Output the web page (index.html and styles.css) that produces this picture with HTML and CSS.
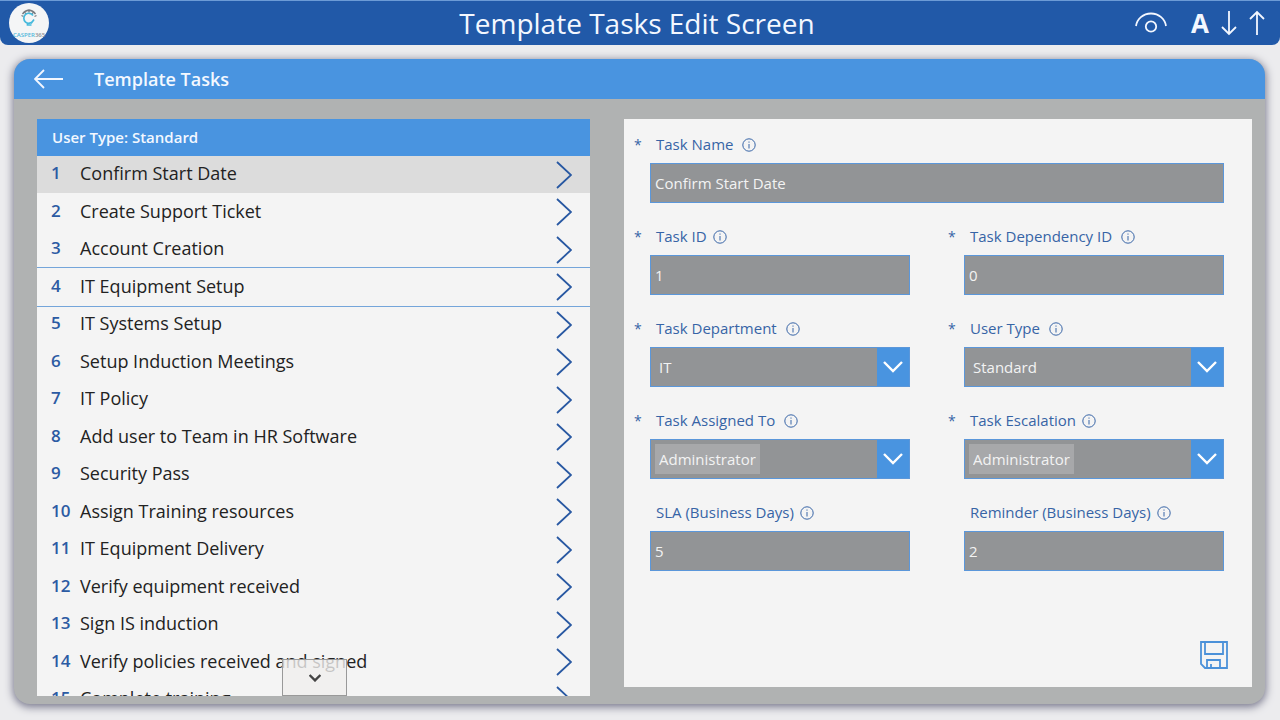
FILE: index.html
```html
<!DOCTYPE html>
<html lang="en">
<head>
<meta charset="utf-8">
<meta name="viewport" content="width=device-width, initial-scale=1">
<title>Template Tasks Edit Screen</title>
<link rel="stylesheet" href="styles.css">
</head>
<body>
<svg class="symbols" aria-hidden="true">
  <symbol id="chevron-right" viewBox="0 0 16 28"><path d="M1 1 15 14 1 27"/></symbol>
  <symbol id="chevron-down" viewBox="0 0 20 12"><path d="M1 1 10 10 19 1"/></symbol>
  <symbol id="info" viewBox="0 0 14 14"><circle cx="7" cy="7" r="6.2"/><path d="M7 6v4.5M7 3.5v1.2"/></symbol>
</svg>

<header class="topbar">
  <svg class="logo" viewBox="0 0 40 40" role="img" aria-label="Casper365">
    <circle cx="20" cy="20" r="20" fill="#f4f5f6"/>
    <path d="M12.500 12.500l2 1M15.500 8.500l1.500 2.500M20 6.500v3M24.500 8.500l-1.500 2.500M27.500 12.500l-2 1M13.500 11q2.500-3.500 6.500-4 4 .5 6.500 4" fill="none" stroke="#777b80" stroke-width="1.300"/>
    <path d="M24 12.500a5 5 0 1 0 0 5.500M18.500 19.500v2.500h4M22 20.500l3-4" fill="none" stroke="#45b9dc" stroke-width="1.700"/>
    <text x="4" y="34" class="logo-text" fill="#4fb6da">CASPER<tspan fill="#8c9095">365</tspan></text>
  </svg>
  <h1 class="topbar-title">Template Tasks Edit Screen</h1>
  <div class="tools">
    <button class="tool tool-view" type="button" aria-label="View">
      <svg class="line-icon" width="32" height="22" viewBox="0 0 32 22"><path d="M1 14C2 7 8 1.500 16 1.500S30 7 31 14"/><circle cx="16" cy="14.500" r="5.200"/></svg>
    </button>
    <button class="tool tool-letter" type="button" aria-label="Text size">A</button>
    <button class="tool" type="button" aria-label="Smaller">
      <svg class="line-icon" width="16" height="26" viewBox="0 0 16 26"><path d="M8 1v23M1 17l7 7 7-7"/></svg>
    </button>
    <button class="tool" type="button" aria-label="Larger">
      <svg class="line-icon" width="16" height="26" viewBox="0 0 16 26"><path d="M8 25V2M1 9l7-7 7 7"/></svg>
    </button>
  </div>
</header>

<main class="panel">
  <div class="panel-head">
    <button class="back" type="button" aria-label="Back">
      <svg class="line-icon" width="30" height="20" viewBox="0 0 30 20"><path d="M29 10H1M10 1L1 10l9 9"/></svg>
    </button>
    <h2 class="panel-title">Template Tasks</h2>
  </div>
  <div class="panel-body">
    <section class="tasks">
      <h3 class="tasks-head">User Type: Standard</h3>
      <ul class="task-list">
        <li class="task is-selected"><button class="task-button" type="button"><b class="num">1</b><span>Confirm Start Date</span><svg class="next"><use href="#chevron-right"/></svg></button></li>
        <li class="task"><button class="task-button" type="button"><b class="num">2</b><span>Create Support Ticket</span><svg class="next"><use href="#chevron-right"/></svg></button></li>
        <li class="task"><button class="task-button" type="button"><b class="num">3</b><span>Account Creation</span><svg class="next"><use href="#chevron-right"/></svg></button></li>
        <li class="task is-focused"><button class="task-button" type="button"><b class="num">4</b><span>IT Equipment Setup</span><svg class="next"><use href="#chevron-right"/></svg></button></li>
        <li class="task"><button class="task-button" type="button"><b class="num">5</b><span>IT Systems Setup</span><svg class="next"><use href="#chevron-right"/></svg></button></li>
        <li class="task"><button class="task-button" type="button"><b class="num">6</b><span>Setup Induction Meetings</span><svg class="next"><use href="#chevron-right"/></svg></button></li>
        <li class="task"><button class="task-button" type="button"><b class="num">7</b><span>IT Policy</span><svg class="next"><use href="#chevron-right"/></svg></button></li>
        <li class="task"><button class="task-button" type="button"><b class="num">8</b><span>Add user to Team in HR Software</span><svg class="next"><use href="#chevron-right"/></svg></button></li>
        <li class="task"><button class="task-button" type="button"><b class="num">9</b><span>Security Pass</span><svg class="next"><use href="#chevron-right"/></svg></button></li>
        <li class="task"><button class="task-button" type="button"><b class="num">10</b><span>Assign Training resources</span><svg class="next"><use href="#chevron-right"/></svg></button></li>
        <li class="task"><button class="task-button" type="button"><b class="num">11</b><span>IT Equipment Delivery</span><svg class="next"><use href="#chevron-right"/></svg></button></li>
        <li class="task"><button class="task-button" type="button"><b class="num">12</b><span>Verify equipment received</span><svg class="next"><use href="#chevron-right"/></svg></button></li>
        <li class="task"><button class="task-button" type="button"><b class="num">13</b><span>Sign IS induction</span><svg class="next"><use href="#chevron-right"/></svg></button></li>
        <li class="task"><button class="task-button" type="button"><b class="num">14</b><span>Verify policies received and signed</span><svg class="next"><use href="#chevron-right"/></svg></button></li>
        <li class="task"><button class="task-button" type="button"><b class="num">15</b><span>Complete training</span><svg class="next"><use href="#chevron-right"/></svg></button></li>
      </ul>
      <button class="scroll-down" type="button" aria-label="Scroll down"><svg class="scroll-icon"><use href="#chevron-down"/></svg></button>
    </section>

    <form class="form">
      <div class="fields">
        <div class="field field-wide">
          <span class="star">*</span>
          <label class="label" for="name">Task Name<svg class="info"><use href="#info"/></svg></label>
          <input class="control" id="name" value="Confirm Start Date">
        </div>
        <div class="field">
          <span class="star">*</span>
          <label class="label label-tight" for="task-id">Task ID<svg class="info"><use href="#info"/></svg></label>
          <input class="control" id="task-id" value="1">
        </div>
        <div class="field">
          <span class="star">*</span>
          <label class="label" for="dependency">Task Dependency ID<svg class="info"><use href="#info"/></svg></label>
          <input class="control" id="dependency" value="0">
        </div>
        <div class="field">
          <span class="star">*</span>
          <label class="label" for="department">Task Department<svg class="info"><use href="#info"/></svg></label>
          <div class="control dropdown"><select class="select" id="department"><option>IT</option></select><span class="arrow"><svg class="arrow-icon"><use href="#chevron-down"/></svg></span></div>
        </div>
        <div class="field">
          <span class="star">*</span>
          <label class="label" for="user-type">User Type<svg class="info"><use href="#info"/></svg></label>
          <div class="control dropdown"><select class="select" id="user-type"><option>Standard</option></select><span class="arrow"><svg class="arrow-icon"><use href="#chevron-down"/></svg></span></div>
        </div>
        <div class="field">
          <span class="star">*</span>
          <label class="label" for="assigned">Task Assigned To<svg class="info"><use href="#info"/></svg></label>
          <div class="control dropdown"><select class="select select-chip" id="assigned"><option>Administrator</option></select><span class="arrow"><svg class="arrow-icon"><use href="#chevron-down"/></svg></span></div>
        </div>
        <div class="field">
          <span class="star">*</span>
          <label class="label label-tight" for="escalation">Task Escalation<svg class="info"><use href="#info"/></svg></label>
          <div class="control dropdown"><select class="select select-chip" id="escalation"><option>Administrator</option></select><span class="arrow"><svg class="arrow-icon"><use href="#chevron-down"/></svg></span></div>
        </div>
        <div class="field">
          <label class="label label-tight" for="sla">SLA (Business Days)<svg class="info"><use href="#info"/></svg></label>
          <input class="control" id="sla" value="5">
        </div>
        <div class="field">
          <label class="label label-tight" for="reminder">Reminder (Business Days)<svg class="info"><use href="#info"/></svg></label>
          <input class="control" id="reminder" value="2">
        </div>
      </div>
      <button class="save" type="button" aria-label="Save">
        <svg class="save-icon" width="28" height="28" viewBox="0 0 28 28"><path d="M1 1h26v26H5l-4-4zM5 1v12h18V1M7 27v-8h13v8M11 27v-4"/></svg>
      </button>
    </form>
  </div>
</main>
</body>
</html>
```
FILE: styles.css
```css
* {
  box-sizing: border-box;
}

body {
  margin: 0;
  height: 100vh;
  min-height: 640px;
  display: flex;
  flex-direction: column;
  background: #ececee;
  font-family: "Open Sans", "Noto Sans", sans-serif;
  overflow: hidden;
}

h1, h2, h3, ul {
  margin: 0;
  padding: 0;
}

button {
  border: 0;
  padding: 0;
  background: none;
  color: inherit;
  font: inherit;
  cursor: pointer;
}

svg {
  flex: none;
  display: block;
}

.symbols {
  position: absolute;
  width: 0;
  height: 0;
}

.line-icon {
  fill: none;
  stroke: #f3f7ff;
  stroke-width: 1.8;
}

.topbar {
  flex: none;
  height: 45px;
  display: grid;
  grid-template-columns: 1fr auto 1fr;
  align-items: center;
  padding: 0 15px 0 9px;
  background: #2159a8;
  border-top: 1px solid #6c9bd6;
  border-radius: 0 0 8px 8px;
  color: #f3f7ff;
}

.logo {
  width: 40px;
  height: 40px;
}

.logo-text {
  font-size: 6px;
  font-weight: 600;
}

.topbar-title {
  font-size: 28px;
  line-height: 40px;
  font-weight: 400;
}

.tools {
  display: flex;
  justify-content: flex-end;
  align-items: center;
  gap: 12px;
}

.tool-view {
  margin-right: 12px;
}

.tool-letter {
  font-size: 26px;
  line-height: 40px;
  font-weight: 700;
}

.panel {
  flex: 1;
  min-height: 0;
  margin: 14px 15px 16px 14px;
  display: flex;
  flex-direction: column;
  background: #b0b2b2;
  border-radius: 16px;
  box-shadow: 0 2px 8px 1px #77778c;
  overflow: hidden;
}

.panel-head {
  flex: none;
  height: 40px;
  display: flex;
  align-items: center;
  gap: 30px;
  padding: 0 20px;
  background: #4994e0;
  color: #f3f8ff;
}

.panel-title {
  font-size: 18px;
  line-height: 24px;
  font-weight: 600;
}

.panel-body {
  flex: 1;
  min-height: 0;
  display: grid;
  grid-template-columns: 553fr 628fr;
  gap: 34px;
  padding: 20px 13px 8px 23px;
}

.tasks {
  position: relative;
  min-height: 0;
  display: flex;
  flex-direction: column;
  background: #f4f4f4;
  overflow: hidden;
}

.tasks-head {
  flex: none;
  padding: 0 15px;
  background: #4994e0;
  color: #f3f8ff;
  font-size: 15px;
  line-height: 37px;
  font-weight: 600;
}

.task-list {
  flex: 1;
  min-height: 0;
  list-style: none;
  overflow: hidden;
}

.task {
  height: 37px;
}

.task:nth-child(even) {
  height: 38px;
}

.is-selected {
  background: #dcdcdc;
}

.is-focused {
  outline: 1px solid #74a5da;
}

.task-button {
  width: 100%;
  height: 100%;
  display: flex;
  align-items: center;
  padding: 0 18px 0 14px;
  color: #222;
  font-size: 18px;
  line-height: 34px;
  text-align: left;
}

.task-button > :not(svg) {
  padding-bottom: 3px;
}

.num {
  width: 29px;
  color: #2c5ba3;
  font-size: 17px;
  font-weight: 600;
}

.next {
  width: 16px;
  height: 28px;
  margin-left: auto;
  fill: none;
  stroke: #2858a2;
  stroke-width: 1.8;
}

.scroll-down {
  position: absolute;
  left: 245px;
  bottom: 0;
  width: 65px;
  height: 37px;
  display: grid;
  place-items: center;
  background: rgba(240, 239, 238, 0.8);
  border: 1px solid #999;
}

.scroll-icon {
  width: 12px;
  height: 8px;
  fill: none;
  stroke: #444;
  stroke-width: 4;
}

.form {
  min-height: 0;
  margin-bottom: 9px;
  display: flex;
  flex-direction: column;
  justify-content: space-between;
  padding: 12px 28px 18px 10px;
  background: #f4f4f4;
}

.fields {
  display: grid;
  grid-template-columns: 1fr 1fr;
  gap: 20px 38px;
}

.field {
  display: grid;
  grid-template-columns: 16px 1fr;
  grid-template-rows: 32px 40px;
}

.field-wide {
  grid-column: 1 / -1;
}

.star {
  grid-column: 1;
  color: #3764a6;
  font-size: 14px;
  line-height: 28px;
}

.label {
  grid-column: 2;
  grid-row: 1;
  display: flex;
  align-items: center;
  align-self: start;
  gap: 9px;
  padding-left: 6px;
  color: #3764a6;
  font-size: 15px;
  line-height: 27px;
}

.label-tight {
  gap: 6px;
}

.info {
  width: 14px;
  height: 14px;
  fill: none;
  stroke: #3764a6;
  stroke-width: 1;
}

.control {
  grid-column: 2;
  width: 100%;
  min-width: 0;
  height: 40px;
  padding: 0 4px;
  border: 1px solid #5b97da;
  border-radius: 0;
  background: #929496;
  color: #f3f3f3;
  font-family: inherit;
  font-size: 15px;
}

.dropdown {
  display: flex;
  align-items: center;
  padding: 0;
}

.select {
  appearance: none;
  flex: 1;
  min-width: 0;
  height: 30px;
  margin-left: 4px;
  padding: 0 4px;
  border: 0;
  border-radius: 0;
  background: transparent;
  color: inherit;
  font: inherit;
}

.select-chip {
  flex: none;
  background: #a7a8aa;
}

.arrow {
  width: 32px;
  height: 100%;
  margin-left: auto;
  display: grid;
  place-items: center;
  background: #4994e0;
  pointer-events: none;
}

.arrow-icon {
  width: 20px;
  height: 12px;
  fill: none;
  stroke: #fff;
  stroke-width: 2.4;
}

.save {
  align-self: flex-end;
  margin-right: -4px;
}

.save-icon {
  fill: none;
  stroke: #4b91d9;
  stroke-width: 1.8;
}
```
